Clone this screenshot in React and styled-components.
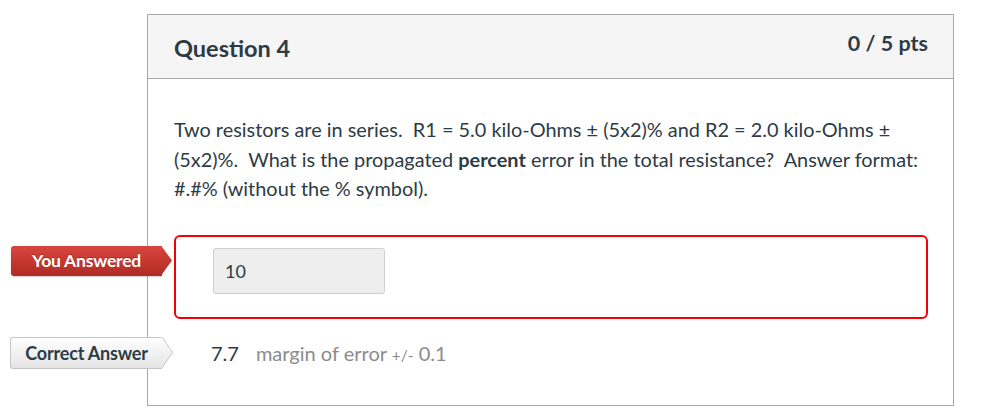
import React from "react";
import styled, { createGlobalStyle } from "styled-components";

const Global = createGlobalStyle`
  html, body { margin: 0; padding: 0; background: #fff; }
  body { font-family: Lato, "Open Sans", "Liberation Sans", sans-serif; color: #2d3b45; }
`;

const Page = styled.div`
  padding: 14px 0 0 147px;
  width: 992px;
  height: 411px;
  box-sizing: border-box;
  overflow: hidden;
`;

const Card = styled.div`
  width: 807px;
  height: 392px;
  box-sizing: border-box;
  border: 1px solid #a9a9a9;
`;

const Header = styled.div`
  height: 64px;
  box-sizing: border-box;
  background: #f5f5f5;
  border-bottom: 1px solid #a9a9a9;
  display: flex;
  justify-content: space-between;
  align-items: flex-start;
  padding: 0 25px 0 26px;
`;

const Title = styled.h2`
  margin: 0;
  padding-top: 18px;
  font-size: 23.5px;
  font-weight: 700;
  line-height: 30px;
  color: #2d3b45;
`;

const Points = styled.div`
  padding-top: 14px;
  font-size: 21.5px;
  font-weight: 700;
  line-height: 28px;
  color: #2d3b45;
`;

const Body = styled.div`
  padding: 36px 25px 0 26px;
`;

const Text = styled.p`
  margin: 0;
  font-size: 19.9px;
  line-height: 29.5px;
  color: #2d3b45;
`;

const Answers = styled.div`
  margin-top: 31px;
  display: flex;
  flex-direction: column;
`;

const AnswerRow = styled.div`
  position: relative;
  box-sizing: border-box;
  border: ${(p) => (p.$wrong ? "2px solid #f40000" : "2px solid transparent")};
  border-radius: 6px;
  height: ${(p) => p.$h}px;
  padding-left: ${(p) => (p.$wrong ? 37 : 35)}px;
  display: flex;
  align-items: ${(p) => (p.$wrong ? "flex-start" : "center")};
  padding-top: ${(p) => (p.$wrong ? "11px" : "0")};
  margin-bottom: ${(p) => p.$mb || 0}px;
`;

const Tag = styled.div`
  position: absolute;
  left: ${(p) => (p.$red ? -165 : -166)}px;
  top: ${(p) => p.$top}px;
  height: ${(p) => p.$h}px;
  width: ${(p) => (p.$red ? 151 : 152)}px;
  box-sizing: border-box;
  display: flex;
  align-items: center;
  justify-content: center;
  font-size: ${(p) => (p.$red ? 17.5 : 18)}px;
  font-weight: 700;
  letter-spacing: -0.2px;
  border-radius: 3px 0 0 3px;
  ${(p) =>
    p.$red
      ? `
    color: #fff;
    background: linear-gradient(#d9463f, #b02a24);
    text-shadow: 0 -1px 0 rgba(0,0,0,0.25);
    box-shadow: 0 1px 2px rgba(0,0,0,0.2);
  `
      : `
    color: #2d3b45;
    background: linear-gradient(#ffffff, #e4e4e4);
    border: 1px solid #c6c6c6;
    border-right: none;
  `}
  &::after {
    content: "";
    position: absolute;
    right: -10px;
    top: ${(p) => (p.$red ? 0 : -1)}px;
    width: 11px;
    height: ${(p) => p.$h}px;
    background: ${(p) =>
      p.$red ? "linear-gradient(#d9463f, #b02a24)" : "linear-gradient(#ffffff, #e4e4e4)"};
    clip-path: polygon(0 0, 100% 50%, 0 100%);
  }
  ${(p) =>
    !p.$red &&
    `
    &::before {
      content: "";
      position: absolute;
      right: -11px;
      top: -1px;
      width: 11px;
      height: ${p.$h}px;
      background: #c6c6c6;
      clip-path: polygon(0 0, 100% 50%, 0 100%);
    }
  `}
`;

const Input = styled.div`
  width: 172px;
  height: 46px;
  box-sizing: border-box;
  background: #eeeeee;
  border: 1px solid #cfcfcf;
  border-radius: 3px;
  padding: 0 11px;
  display: flex;
  align-items: center;
  font-size: 18px;
  color: #2d3b45;
`;

const Value = styled.span`
  font-size: 20px;
  color: #2d3b45;
  margin-right: 17px;
`;

const Margin = styled.span`
  font-size: 20px;
  color: #8b8b8b;
`;

const Small = styled.span`
  font-size: 15.5px;
`;

export default function App() {
  return (
    <>
      <Global />
      <Page>
        <Card>
          <Header>
            <Title>Question 4</Title>
            <Points>0 / 5 pts</Points>
          </Header>
          <Body>
            <Text>
              Two resistors are in series.&nbsp; R1 = 5.0 kilo-Ohms ± (5x2)% and R2 = 2.0 kilo-Ohms ±
              (5x2)%.&nbsp; What is the propagated <b>percent</b> error in the total resistance?&nbsp; Answer format:
              #.#% (without the % symbol).
            </Text>
            <Answers>
              <AnswerRow $wrong $h={84} $mb={16}>
                <Tag $red $top={9} $h={30}>You Answered</Tag>
                <Input>10</Input>
              </AnswerRow>
              <AnswerRow $h={36}>
                <Tag $top={0} $h={32}>Correct Answer</Tag>
                <Value>7.7</Value>
                <Margin>
                  margin of error <Small>+/-</Small> 0.1
                </Margin>
              </AnswerRow>
            </Answers>
          </Body>
        </Card>
      </Page>
    </>
  );
}
